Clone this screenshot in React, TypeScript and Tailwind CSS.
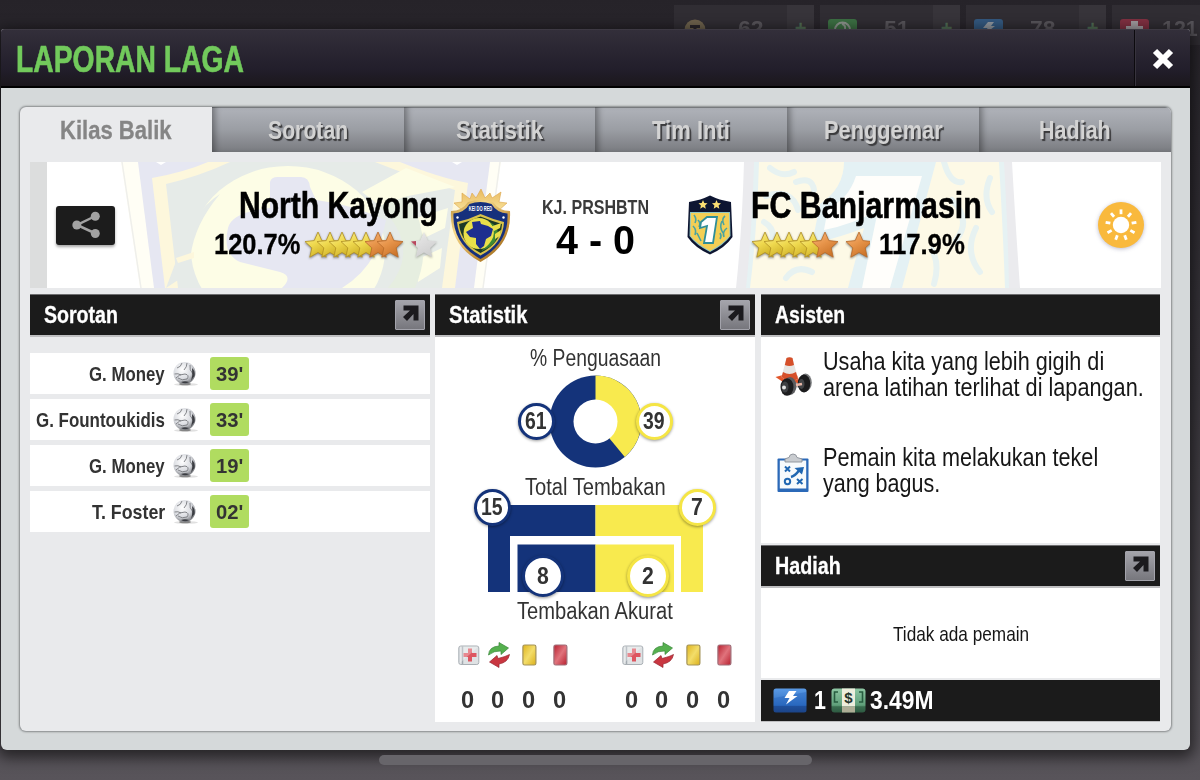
import { useLayoutEffect, useRef, useState, type ReactNode } from "react";
import clsx from "clsx";

interface CondensedProps {
  /** Width in pixels that the line of text is squeezed into. */
  width: number;
  className?: string;
  children: ReactNode;
}

/** A single line of text, condensed horizontally to a given width. */
function Condensed({ width, className, children }: CondensedProps) {
  const ref = useRef<HTMLSpanElement>(null);
  const [scale, setScale] = useState(0.8);

  useLayoutEffect(() => {
    if (ref.current) setScale(width / ref.current.offsetWidth);
  }, [width]);

  return (
    <span className={clsx("flex shrink-0 leading-none whitespace-nowrap", className)} style={{ width }}>
      <span ref={ref} className="shrink-0 origin-left" style={{ transform: `scaleX(${scale})` }}>
        {children}
      </span>
    </span>
  );
}

const STAR = "M14 1 L17.8 9.6 L27 10.6 L20.2 16.9 L22.2 26.2 L14 21.5 L5.8 26.2 L7.8 16.9 L1 10.6 L10.2 9.6 Z";

function Defs() {
  return (
    <svg width="0" height="0" className="absolute" aria-hidden="true">
      <defs>
        <linearGradient id="gold" x1="0" y1="0" x2="0.6" y2="1">
          <stop offset="0" stopColor="#f9ef9c" />
          <stop offset="0.5" stopColor="#efd94f" />
          <stop offset="1" stopColor="#cdae24" />
        </linearGradient>
        <linearGradient id="orange" x1="0" y1="0" x2="0.6" y2="1">
          <stop offset="0" stopColor="#f7b984" />
          <stop offset="0.5" stopColor="#e8964c" />
          <stop offset="1" stopColor="#cb7328" />
        </linearGradient>
        <linearGradient id="silver" x1="0" y1="0" x2="0.6" y2="1">
          <stop offset="0" stopColor="#ececec" />
          <stop offset="1" stopColor="#cfcfcf" />
        </linearGradient>
        <linearGradient id="crestGold" x1="0" y1="0" x2="1" y2="1">
          <stop offset="0" stopColor="#b98a33" />
          <stop offset="0.3" stopColor="#f6d98a" />
          <stop offset="0.7" stopColor="#c08a34" />
          <stop offset="1" stopColor="#8a5f1e" />
        </linearGradient>
        <linearGradient id="crown" x1="0" y1="0" x2="0" y2="1">
          <stop offset="0" stopColor="#e9b95c" />
          <stop offset="1" stopColor="#f8e29b" />
        </linearGradient>
        <linearGradient id="blueBox" x1="0" y1="0" x2="0" y2="1">
          <stop offset="0" stopColor="#5b9be6" />
          <stop offset="0.7" stopColor="#2f6fc4" />
          <stop offset="0.74" stopColor="#1f4f9b" />
          <stop offset="1" stopColor="#1b4488" />
        </linearGradient>
        <linearGradient id="greenBox" x1="0" y1="0" x2="0" y2="1">
          <stop offset="0" stopColor="#8fc7a4" />
          <stop offset="0.7" stopColor="#5f9f79" />
          <stop offset="0.76" stopColor="#3a6e50" />
          <stop offset="1" stopColor="#2e5a41" />
        </linearGradient>
        <radialGradient id="ball" cx="0.4" cy="0.35" r="0.7">
          <stop offset="0" stopColor="#ffffff" />
          <stop offset="0.6" stopColor="#d9dbe0" />
          <stop offset="1" stopColor="#6f7176" />
        </radialGradient>
        <linearGradient id="red" x1="0" y1="0" x2="1" y2="1">
          <stop offset="0" stopColor="#b8202f" />
          <stop offset="0.5" stopColor="#e0737c" />
          <stop offset="1" stopColor="#b8202f" />
        </linearGradient>
        <linearGradient id="yellow" x1="0" y1="0" x2="1" y2="1">
          <stop offset="0" stopColor="#dfb41e" />
          <stop offset="0.5" stopColor="#f3dd6a" />
          <stop offset="1" stopColor="#dbb01a" />
        </linearGradient>
      </defs>
    </svg>
  );
}

interface StarsProps {
  fills: string[];
  width: number;
}

function Stars({ fills, width }: StarsProps) {
  return (
    <svg width={width} height="30" className="shrink-0 drop-shadow-[0_1px_1px_rgba(0,0,0,0.45)]">
      {fills.map((fill, i) => (
        <path
          key={i}
          d={STAR}
          transform={`translate(${i * 12} 1)`}
          fill={fill}
          stroke={fill === "url(#gold)" ? "#b08f22" : "#b86a28"}
          strokeWidth="0.8"
          strokeLinejoin="round"
        />
      ))}
    </svg>
  );
}

/* ---------- crests ---------- */

function KayongCrest() {
  return (
    <svg width="61" height="74" viewBox="0 0 61 74" className="shrink-0">
      <path d="M13 22 L4 14 L12 13 L12 4 L20 10 L22 4 L26 9 L31 0 L35 9 L40 4 L42 9 L51 3 L49 13 L57 14 L48 22Z" fill="url(#crown)" stroke="#dba54a" strokeWidth="0.6" />
      <path d="M1 22 Q12 22 18 13 Q30 9 43 13 Q49 22 60 22 Q62 56 30.500 73 Q-1 56 1 22Z" fill="url(#crestGold)" />
      <path d="M3.500 24.500 Q14 24 19.500 15 Q30 11 41.500 15 Q47 24 57.500 24.500 Q59 54 30.500 70 Q2 54 3.500 24.500Z" fill="#16307c" />
      <path d="M7 33 Q20 30 30.500 25 Q42 30 54 33 Q53 55 30.500 66.500 Q9 55 7 33Z" fill="#d9c24a" />
      <path d="M9 35 Q20 32 30.500 27.500 Q42 32 52 35 Q51 54 30.500 64 Q11 54 9 35Z" fill="#1d3a26" />
      <circle cx="29" cy="44.500" r="15.500" fill="#e9e04a" />
      <path d="M31 62 Q51 55 47 38 L40 33 Q51 48 31 62Z" fill="#3f8a34" />
      <path d="M40 38 L51 34 L50 39 L44 42Z M45 45 L51 41 L50 47 L45 50Z" fill="#e9e04a" />
      <path d="M16 43 L23 39 L22 33 L30 32 L31 35 L38 37 L43 40 L41 47 L36 50 L34 57 L30 60 L26 55 L26 49 L20 48Z" fill="#1d2f8f" />
      <g transform="translate(30.500 21.500) scale(0.54 1)">
        <text textAnchor="middle" fontSize="7.500" fontWeight="700" fill="#fff">
          KEI DO RED
        </text>
      </g>
      <circle cx="7.500" cy="28.500" r="1.200" fill="#fff" />
      <circle cx="53.500" cy="28.500" r="1.200" fill="#fff" />
    </svg>
  );
}

function BanjarmasinCrest() {
  return (
    <svg width="46" height="60" viewBox="0 0 46 60" className="shrink-0">
      <path d="M2 7 Q14 5 23 0.500 Q32 5 44 7 L45.500 42 Q38 53 23 59.500 Q8 53 0.500 42Z" fill="#0d1531" />
      <path d="M3 17 H43 L43.500 41 Q37 50 23 57 Q9 50 2.500 41Z" fill="#8ec6c4" />
      <path d="M4 18 H42 L42.500 41 Q36 49 23 56 Q10 49 3.500 41Z" fill="#f3cf55" />
      <path d="M7 20 q3 4 1 8 M6 31 q4 4 2 9 M10 38 q2 4 4 8 M38 21 q-4 3 -1 9 M40 33 q-5 4 -3 9 M35 26 q-3 6 1 12 M11 25 q3 3 1 7 M33 44 q2 -3 0 -6" fill="none" stroke="#4aa3a0" strokeWidth="1.600" />
      <path d="M20 22 H30 L26 48 H17 L20 31 L13 33 L14 27Z" fill="#fff" stroke="#2f8e98" strokeWidth="1.800" />
      <path d="M16 5 l1.300 3 3.200.3 -2.400 2.200 .7 3.200 -2.800 -1.700 -2.800 1.700 .7 -3.200 -2.400 -2.200 3.200 -.3z M29.500 5 l1.300 3 3.200.3 -2.400 2.200 .7 3.200 -2.800 -1.700 -2.800 1.700 .7 -3.200 -2.400 -2.200 3.200 -.3z" fill="#fbdf73" />
    </svg>
  );
}

function KayongWatermark() {
  return (
    <svg width="410" height="126" viewBox="0 0 410 126" className="absolute top-0 left-20" aria-hidden="true">
      <path d="M11 0 H391 L373 126 H30Z" fill="#fffef5" />
      <path d="M12 0 L31 126 M390 0 L373 126" stroke="#efefeb" strokeWidth="1.500" />
      <path d="M28 0 H380 L364 126 H44Z" fill="#e6e7f2" />
      <path d="M42 16 Q75 10 98 0 H290 Q330 16 358 21 L345 126 H55Z" fill="#fdf7dc" />
      <path d="M56 22 Q90 14 120 0 H265 Q300 14 345 28 L332 126 H68Z" fill="#e6ebe8" />
      <ellipse cx="178" cy="88" rx="97" ry="84" fill="#fdfde6" />
      <path d="M56 126 L80 110 Q78 70 110 32 Q82 50 68 94Z" fill="#e6ebe8" />
      <path d="M66 96 L84 90 L84 96 L68 101Z" fill="#fdf7dc" />
      <path d="M252 30 L296 6 L345 25 L298 34 L270 44Z M300 58 L338 46 L335 66 L306 80Z M302 100 L332 86 L330 106 L308 120Z" fill="#fdfde6" />
      <path d="M270 44 Q312 86 278 126 H305 Q325 80 298 34Z" fill="#e6eee0" />
      <path d="M160 20 Q161 15 168 15 H191 Q199 15 200 25 L206 38 Q240 42 276 58 Q268 104 232 126 H172 Q184 114 170 110 L130 100 Q112 92 118 66 Q122 50 160 46Z" fill="#e6e7f2" />
      <path d="M46 0 l5 3 5 -3z M342 0 l5 3 5 -3z" fill="#fff" />
    </svg>
  );
}

function BanjarmasinWatermark() {
  return (
    <svg width="284" height="126" viewBox="0 0 284 126" className="absolute top-0 left-[706px]" aria-hidden="true">
      <path d="M8 0 H276 Q280 70 284 126 H0 Q6 70 8 0Z" fill="#ebebee" />
      <path d="M18 0 H268 Q272 70 273 126 H10 Q16 70 18 0Z" fill="#e6f2f3" />
      <path d="M23 0 H263 Q267 70 269 126 H14 Q21 70 23 0Z" fill="#fdf9e6" />
      <path d="M108 0 H200 L166 126 H112 L128 66 Q108 74 76 82 L84 42 Q108 26 108 0Z" fill="#e4f1f4" />
      <path d="M120 14 H186 L154 126 H126 L142 48 Q118 62 88 68 L92 46 Q112 38 120 14Z" fill="#fffefb" />
      <path d="M34 6 q12 10 24 4 M30 34 q26 -8 32 14 M60 20 q16 -6 18 8 M28 60 q14 8 6 26 M50 116 q10 -14 26 -6 M208 0 q6 22 18 20 M216 38 q20 20 4 40 M240 66 q-12 24 4 44 M254 16 q-8 20 2 34 M196 88 q8 14 2 34" fill="none" stroke="#e7f2f1" strokeWidth="6" strokeLinecap="round" />
    </svg>
  );
}

/* ---------- small icons ---------- */

function ShareIcon() {
  return (
    <svg width="30" height="28" viewBox="0 0 30 28">
      <path d="M24.500 5 L6 14 L24.500 22.500" fill="none" stroke="#a2a2a2" strokeWidth="2.500" />
      <g fill="#a2a2a2">
        <circle cx="24.300" cy="5.200" r="4.500" />
        <circle cx="5.800" cy="14" r="4.500" />
        <circle cx="24.300" cy="22.500" r="4.500" />
      </g>
    </svg>
  );
}

function SunIcon() {
  const rays = [0, 40, 80, 120, 160, 200, 240, 280, 320];
  return (
    <svg width="46" height="46" viewBox="0 0 46 46" className="shrink-0 drop-shadow-[0_1px_2px_rgba(60,60,110,0.35)]">
      <circle cx="23" cy="23" r="23" fill="#f9b93d" />
      <circle cx="23" cy="23" r="8.200" fill="#fff" />
      {rays.map((angle) => (
        <path key={angle} d="M23 12.200 V7.400" stroke="#fff" strokeWidth="2.800" transform={`rotate(${angle} 23 23)`} />
      ))}
    </svg>
  );
}

function BallIcon() {
  return (
    <svg width="27" height="26" viewBox="0 0 27 26" className="shrink-0">
      <ellipse cx="14" cy="23.500" rx="12" ry="1.500" fill="#000" opacity="0.12" />
      <ellipse cx="13" cy="23" rx="6" ry="1.300" fill="#000" opacity="0.4" />
      <circle cx="12.500" cy="12" r="11" fill="url(#ball)" />
      <path d="M5 7 Q9 6 10 2 M12 9 Q15 6 15 2 M2.500 13 Q6 12 9 14 M4 17 Q7 13 13 13 Q18 14 15 18 Q10 20 6 17 M18 4 Q17 9 21 13" fill="none" stroke="#77797e" strokeWidth="0.900" />
      <path d="M20 7 Q23.500 10 22.500 15 Q20 18 19 20 Q21 14 20 7Z M9 21 Q13 19.500 17 21 Q13 23.500 9 21Z" fill="#3b3d42" />
    </svg>
  );
}

function ExpandButton() {
  return (
    <button
      type="button"
      aria-label="Buka"
      className="flex h-[30px] w-[30px] items-center justify-center rounded-[1px] border border-[#a3a3ab] bg-linear-to-b from-[#a4a4ab] to-[#77777d]"
    >
      <svg width="18" height="18" viewBox="0 0 18 18" className="translate-x-[0.500px] -translate-y-[1.500px]">
        <path d="M2 1 H17 V16 H12 V9.500 L5.500 16.500 L1.500 12.500 L8.500 6 H2Z" fill="#1b1a1e" />
      </svg>
    </button>
  );
}

function ConeIcon() {
  return (
    <svg width="37" height="40" viewBox="0 0 37 40" className="shrink-0">
      <path d="M0.500 20 L8 18 H22 L26 28 L8 25Z" fill="#e2562a" />
      <path d="M11.500 1 Q14.500 -0.500 17.500 1 L23 22 Q14 27 6.500 20Z" fill="#e7e5e2" />
      <path d="M11.500 1 Q14.500 -0.500 17.500 1 L19 8 Q14.500 10 9.800 8Z M8 15 Q14.500 19 21 15 L23 22 Q14 27 6.500 20Z" fill="#d6502a" />
      <path d="M18 25 L27 27 V31 L18 30Z" fill="#b9b4b4" />
      <ellipse cx="15" cy="29" rx="6.500" ry="9" fill="#5b5c5f" />
      <ellipse cx="12" cy="30" rx="6.500" ry="8.800" fill="#1d1d1f" />
      <ellipse cx="10" cy="30" rx="3.500" ry="5.500" fill="#3e4043" />
      <circle cx="9" cy="30.500" r="2" fill="#e2e2e2" />
      <ellipse cx="30.500" cy="25.500" rx="6.300" ry="9" fill="#77797b" />
      <ellipse cx="29" cy="26.500" rx="6.300" ry="9" fill="#1b1b1d" />
      <ellipse cx="26.500" cy="27" rx="3" ry="5" fill="#424447" />
      <path d="M21 28 L27 27" stroke="#e9b7a8" strokeWidth="2.500" />
    </svg>
  );
}

function ClipboardIcon() {
  return (
    <svg width="32" height="40" viewBox="0 0 32 40" className="shrink-0">
      <rect x="0.500" y="5.500" width="31" height="33.500" rx="1" fill="#2b69b8" />
      <rect x="2.800" y="7.500" width="26.400" height="28" fill="#f7fafc" />
      <path d="M8 9 V6 Q10 5 12 4.500 Q12.500 1 16 1 Q19.500 1 20 4.500 Q22 5 25 6 V9Z" fill="#c9ccd0" stroke="#8b9097" strokeWidth="0.900" />
      <g fill="none" stroke="#2167b2" strokeWidth="2">
        <path d="M8 13.500 L13 18.500 M13 13.500 L8 18.500 M20 26 L25.500 31 M25.500 26 L20 31" />
        <circle cx="10.500" cy="28.500" r="2.700" />
        <path d="M14 24 Q18 23 22 17.500" strokeWidth="2.500" />
      </g>
      <path d="M17.500 15 L27 14 L25 21.500Z" fill="#2167b2" />
    </svg>
  );
}

function InjuryIcon() {
  return (
    <svg width="22" height="24" viewBox="0 0 22 24" className="shrink-0">
      <rect x="0.800" y="3" width="20" height="18.500" rx="2" fill="#dfe2e4" stroke="#a9afb4" />
      <path d="M4.500 3.500 V21" stroke="#a3aab0" strokeWidth="1.500" />
      <path d="M10 5.500 h4 v4.500 h4.500 v4 h-4.500 v4.500 h-4 v-4.500 h-4.500 v-4 h4.500z" fill="#dd5660" />
      <path d="M2 20 L20 4 V3.500 H2Z" fill="#fff" opacity="0.3" />
    </svg>
  );
}

function SwapIcon() {
  return (
    <svg width="22" height="26" viewBox="0 0 22 26" className="shrink-0">
      <path d="M0.500 13 Q1 4.500 11 4 V0.500 L20.500 6 L13 12.500 V9 Q6 8.500 0.500 13Z" fill="#55b04e" stroke="#378538" strokeWidth="0.700" />
      <path d="M21.500 12.500 Q18 14.500 10 16.500 L9 13.500 L1.500 20 L11 25.500 V22 Q20 20.500 21.500 12.500Z" fill="#c93640" stroke="#96242e" strokeWidth="0.700" />
    </svg>
  );
}

function CardIcon({ color }: { color: "yellow" | "red" }) {
  return (
    <svg width="15" height="24" viewBox="0 0 15 24" className="shrink-0">
      <rect
        x="0.900"
        y="2"
        width="13"
        height="20"
        rx="1.800"
        fill={color === "red" ? "url(#red)" : "url(#yellow)"}
        stroke={color === "red" ? "#a0707a" : "#a3935a"}
        strokeWidth="1.200"
      />
    </svg>
  );
}

function EnergyIcon() {
  return (
    <svg width="34" height="25" viewBox="0 0 34 25" className="shrink-0">
      <rect x="0.500" y="0.500" width="33" height="24" rx="2.500" fill="url(#blueBox)" />
      <path d="M1 10 L33 4 V18 H1Z" fill="#1f5db5" opacity="0.35" />
      <path d="M16 3 H23.500 L20 8 H24.500 L13 16.500 L16.500 10 H11.500Z" fill="#fff" />
    </svg>
  );
}

function CashIcon() {
  return (
    <svg width="35" height="25" viewBox="0 0 35 25" className="shrink-0">
      <rect x="0.500" y="0.500" width="34" height="24" rx="3" fill="url(#greenBox)" />
      <path d="M7 4 H3.500 V14 H7 M28 4 H31.500 V14 H28" fill="none" stroke="#275c3f" strokeWidth="1.600" />
      <rect x="11" y="0.500" width="13" height="18" fill="#eeeedd" />
      <rect x="11" y="18.500" width="13" height="6" fill="#aeae96" />
      <text x="17.500" y="14.500" textAnchor="middle" fontSize="15" fontWeight="700" fill="#25352b">
        $
      </text>
    </svg>
  );
}

/* ---------- layout pieces ---------- */

const RESOURCES = [
  { kind: "token", value: "62" },
  { kind: "cash", value: "51" },
  { kind: "energy", value: "78" },
  { kind: "medic", value: "121" },
];

function ResourceIcon({ kind }: { kind: string }) {
  if (kind === "token") {
    return (
      <svg width="22" height="22" viewBox="0 0 22 22">
        <circle cx="11" cy="11" r="10.500" fill="#6d614c" />
        <path d="M6 6 H16 V9 H12.500 V18 H9.500 V9 H6Z" fill="#29252a" />
      </svg>
    );
  }
  return (
    <svg width="29" height="22" viewBox="0 0 29 22">
      <rect
        width="29"
        height="22"
        rx="3"
        fill={kind === "cash" ? "#3c6f43" : kind === "energy" ? "#33587f" : "#803041"}
      />
      {kind === "cash" && <path d="M7 11 a7.500 7.500 0 0 1 15 0 M14 5 q4 1 3 6" fill="none" stroke="#8b928b" strokeWidth="2" />}
      {kind === "energy" && <path d="M14 3 H20 L17 7 H21 L11 15 L13.500 9 H9Z" fill="#90979f" />}
      {kind === "medic" && <path d="M11 2 h7 v5 h5 v7 h-5 v5 h-7 v-5 h-5 v-7 h5z" fill="#a09a9e" />}
    </svg>
  );
}

function ResourceBar() {
  return (
    <div className="absolute top-[5px] right-0 left-[674px] flex gap-1.5">
      {RESOURCES.map((item) => {
        const last = item.kind === "medic";
        return (
          <div key={item.kind} className={clsx("flex h-10 bg-[#302d33]", last ? "flex-1" : "w-[140px] shrink-0")}>
            <div className={clsx("w-10 pt-3.5", item.kind === "token" ? "pl-2.5" : "pl-2")}>
              <ResourceIcon kind={item.kind} />
            </div>
            <div className={clsx("flex flex-1 pt-[13px] text-[22px] font-bold text-[#57545a]", last ? "pl-2.5" : "justify-center")}>
              <Condensed width={last ? 36 : 25}>{item.value}</Condensed>
            </div>
            {!last && (
              <div className="w-[27px] bg-[#37343a] pt-[9px] text-center text-xl leading-7 font-bold text-[#4f6b54]">+</div>
            )}
          </div>
        );
      })}
    </div>
  );
}

const TABS = [
  { label: "Kilas Balik", width: 112 },
  { label: "Sorotan", width: 80 },
  { label: "Statistik", width: 87 },
  { label: "Tim Inti", width: 78 },
  { label: "Penggemar", width: 119 },
  { label: "Hadiah", width: 72 },
];

function TabBar() {
  return (
    <div role="tablist" className="flex h-[45px] shrink-0 overflow-hidden rounded-t-md">
      {TABS.map((tab, i) => (
        <button
          key={tab.label}
          type="button"
          role="tab"
          aria-selected={i === 0}
          className={clsx(
            "flex w-48 items-center justify-center pt-px text-[26px] font-bold",
            i === 0
              ? "text-[#858585] [-webkit-text-stroke:0.3px_#858585]"
              : "bg-linear-to-b from-[#b0b3ba] via-[#9b9ea4] to-[#797b80] text-[#d3d3d3] shadow-[inset_6px_0_6px_-3px_rgba(0,0,0,0.35),inset_0_1px_0_#7d8084] [text-shadow:2px_2px_1px_#3a3a3c]",
          )}
        >
          <Condensed width={tab.width}>{tab.label}</Condensed>
        </button>
      ))}
    </div>
  );
}

function PanelHeader({ title, width, expandable }: { title: string; width: number; expandable?: boolean }) {
  return (
    <div className="flex h-[43px] shrink-0 items-center justify-between border-t border-b-2 border-t-[#6d6d6f] border-b-[#bfbfc1] bg-[#1b1b1b] pr-[5px] pl-3.5 text-[23px] font-bold text-white">
      <Condensed width={width} className="[-webkit-text-stroke:0.3px_#fff]">{title}</Condensed>
      {expandable && <ExpandButton />}
    </div>
  );
}

function ScoreBand() {
  return (
    <section className="relative flex h-[126px] shrink-0 items-center overflow-hidden bg-white">
      <KayongWatermark />
      <BanjarmasinWatermark />
      <div className="relative h-full w-[17px] bg-[#dcdddd]" />
      <button
        type="button"
        aria-label="Bagikan"
        className="relative ml-[9px] flex h-[39px] w-[59px] items-center justify-center rounded-[3px] bg-[#1c1c1c] shadow-[0_2px_3px_rgba(0,0,0,0.35)]"
      >
        <ShareIcon />
      </button>

      <div className="relative flex w-[323px] flex-col items-end gap-1.5 pb-1 text-black">
        <Condensed width={199} className="text-[37px] font-bold [-webkit-text-stroke:0.6px_#000]">
          North Kayong
        </Condensed>
        <div className="flex items-center">
          <Condensed width={86} className="text-[29px] font-bold [-webkit-text-stroke:0.3px_#000]">120.7%</Condensed>
          <div className="ml-1 flex gap-1.5">
            <Stars
              width={100}
              fills={["url(#gold)", "url(#gold)", "url(#gold)", "url(#gold)", "url(#gold)", "url(#orange)", "url(#orange)"]}
            />
            <svg width="28" height="30" className="drop-shadow-[0_1px_1px_rgba(0,0,0,0.3)]">
              <path d={STAR} transform="translate(0 1)" fill="url(#silver)" />
              <path d="M1 11.500 L6 11 V16 Z" fill="#b8475c" />
            </svg>
          </div>
        </div>
      </div>

      <div className="relative ml-3 pt-0.5">
        <KayongCrest />
      </div>

      <div className="relative flex w-[176px] flex-col items-center gap-[3px] pt-1.5 pr-2">
        <Condensed width={107} className="text-[21px] font-bold text-[#3a3a3a]">KJ. PRSHBTN</Condensed>
        <Condensed width={79} className="text-[40px] font-bold text-black">4 - 0</Condensed>
      </div>

      <div className="relative">
        <BanjarmasinCrest />
      </div>

      <div className="relative ml-[18px] flex flex-col gap-1.5 pb-1 text-black">
        <Condensed width={231} className="text-[37px] font-bold [-webkit-text-stroke:0.6px_#000]">
          FC Banjarmasin
        </Condensed>
        <div className="flex items-center">
          <Stars
            width={88}
            fills={["url(#gold)", "url(#gold)", "url(#gold)", "url(#gold)", "url(#gold)", "url(#orange)"]}
          />
          <div className="ml-1.5 w-[25px] overflow-hidden">
            <Stars width={28} fills={["url(#orange)"]} />
          </div>
          <Condensed width={86} className="ml-[9px] text-[29px] font-bold [-webkit-text-stroke:0.3px_#000]">117.9%</Condensed>
        </div>
      </div>

      <div className="relative ml-auto pr-[17px]">
        <SunIcon />
      </div>
    </section>
  );
}

const GOALS = [
  { player: "G. Money", width: 76, minute: "39'" },
  { player: "G. Fountoukidis", width: 129, minute: "33'" },
  { player: "G. Money", width: 76, minute: "19'" },
  { player: "T. Foster", width: 73, minute: "02'" },
];

function Highlights() {
  return (
    <section className="w-[400px]">
      <PanelHeader title="Sorotan" width={74} expandable />
      <ul className="mt-4 flex flex-col gap-[5px]">
        {GOALS.map((goal) => (
          <li key={goal.minute} className="flex h-[41px] items-center bg-white text-[21px] font-bold text-[#333]">
            <div className="flex w-[135px] justify-end">
              <Condensed width={goal.width}>{goal.player}</Condensed>
            </div>
            <div className="ml-[7px] w-[38px]">
              <BallIcon />
            </div>
            <div className="flex h-[33px] w-[39px] items-center justify-center rounded-[3px] bg-[#b0dc60]">
              <Condensed width={27}>{goal.minute}</Condensed>
            </div>
          </li>
        ))}
      </ul>
    </section>
  );
}

interface BadgeProps {
  value: string;
  team: "home" | "away";
  className: string;
}

/** Round counter that sits on the edge of a chart. */
function Badge({ value, team, className }: BadgeProps) {
  return (
    <div
      className={clsx(
        "absolute flex items-center justify-center rounded-full border-[3px] bg-white text-[23px] font-bold text-[#333] shadow-[0_1px_3px_rgba(0,0,0,0.4)]",
        team === "home" ? "border-[#14337a]" : "border-[#f5e544]",
        className,
      )}
    >
      <Condensed width={value.length > 1 ? 22 : 12}>{value}</Condensed>
    </div>
  );
}

function TeamCounters() {
  return (
    <div className="flex w-[111px] flex-col gap-[21px]">
      <div className="flex h-6 items-center">
        <div className="w-[30px]"><InjuryIcon /></div>
        <div className="w-[34px]"><SwapIcon /></div>
        <div className="w-[31px]"><CardIcon color="yellow" /></div>
        <CardIcon color="red" />
      </div>
      <div className="flex gap-[18px] pl-[3px] text-[24px] font-bold text-[#333]">
        {["injury", "swap", "yellow", "red"].map((key) => (
          <Condensed key={key} width={12.8}>0</Condensed>
        ))}
      </div>
    </div>
  );
}

function Statistics() {
  return (
    <section className="flex w-[320px] flex-col">
      <PanelHeader title="Statistik" width={78} expandable />
      <div className="flex flex-1 flex-col items-center bg-white text-[23px] text-[#333]">
        <Condensed width={131} className="mt-2.5">% Penguasaan</Condensed>

        <div className="relative mt-[5px] h-[93px] w-[155px]">
          <svg width="155" height="93" viewBox="0 0 155 93">
            <circle cx="77.500" cy="46.500" r="46" fill="#14337a" />
            <path d="M77.500 46.500 V0.500 A46 46 0 0 1 106.800 81.900Z" fill="#f8ea4e" />
            <circle cx="77.500" cy="46.500" r="22" fill="#fff" />
          </svg>
          <Badge value="61" team="home" className="top-7 left-0 size-[37px]" />
          <Badge value="39" team="away" className="top-7 right-0 size-[37px]" />
        </div>

        <Condensed width={141} className="mt-2">Total Tembakan</Condensed>

        <div className="relative mt-1.5 h-[87px] w-[215px]">
          <svg width="215" height="87" viewBox="0 0 215 87">
            <path d="M0 87 V0 H107.500 V31 H22 V87Z M29.500 87 V39.500 H107.500 V87Z" fill="#14337a" />
            <path d="M107.500 0 H215 V87 H193 V31 H107.500Z M107.500 39.500 H186 V87 H107.500Z" fill="#f8ea4e" />
          </svg>
          <Badge value="15" team="home" className="-top-4 -left-3.5 size-[37px]" />
          <Badge value="7" team="away" className="-top-4 -right-[13px] size-[37px]" />
          <Badge value="8" team="home" className="top-[50px] left-[34px] size-[42px]" />
          <Badge value="2" team="away" className="top-[50px] left-[139px] size-[42px]" />
        </div>

        <Condensed width={156} className="mt-2">Tembakan Akurat</Condensed>

        <div className="mt-5 flex gap-[53px]">
          <TeamCounters />
          <TeamCounters />
        </div>
      </div>
    </section>
  );
}

function AssistantAndRewards() {
  return (
    <section className="ml-px flex w-[399px] flex-col">
      <PanelHeader title="Asisten" width={70} />
      <div className="flex h-[206px] flex-col bg-white pt-3 pl-3.5 text-[25px] text-[#161616]">
        <div className="flex h-[96px] items-start">
          <div className="w-[48px] pt-2"><ConeIcon /></div>
          <div className="flex flex-col gap-[0.500px]">
            <Condensed width={281}>Usaha kita yang lebih gigih di</Condensed>
            <Condensed width={321}>arena latihan terlihat di lapangan.</Condensed>
          </div>
        </div>
        <div className="flex items-start">
          <div className="w-[48px] pt-2 pl-0.5"><ClipboardIcon /></div>
          <div className="flex flex-col gap-[0.500px]">
            <Condensed width={275}>Pemain kita melakukan tekel</Condensed>
            <Condensed width={117}>yang bagus.</Condensed>
          </div>
        </div>
      </div>
      <div className="h-[2px]" />
      <PanelHeader title="Hadiah" width={66} expandable />
      <div className="flex h-[90px] items-center justify-center bg-white text-[21px] text-[#161616]">
        <Condensed width={136}>Tidak ada pemain</Condensed>
      </div>
      <div className="mt-[2px] flex h-[42px] items-center border-b border-[#bfbfc1] bg-[#1b1b1b] pl-3 text-[25px] font-bold text-white">
        <EnergyIcon />
        <Condensed width={12} className="ml-[7px]">1</Condensed>
        <div className="ml-[5px]"><CashIcon /></div>
        <Condensed width={63} className="ml-1">3.49M</Condensed>
      </div>
    </section>
  );
}

export default function App() {
  return (
    <div className="relative h-[780px] w-[1200px] overflow-hidden bg-linear-to-b from-[#262329] via-[#3a373d] to-[#58545a] pt-[29px] pl-px font-['Liberation_Sans',Arial,sans-serif]">
      <Defs />
      <ResourceBar />

      <main className="relative flex h-[721px] w-[1189px] flex-col rounded-t-[3px] rounded-b-md bg-[#d5d9da] shadow-[0_4px_14px_4px_rgba(0,0,0,0.55)]">
        <header className="flex h-[59px] shrink-0 items-stretch justify-between rounded-t-[3px] border-t border-b-2 border-t-[#3d3943] border-b-black bg-linear-to-b from-[#332f3a] via-[#221e2b] via-70% to-[#1b171c]">
          <h1 className="flex items-center pt-[3px] pl-[15px] text-[37px] font-bold text-[#72ca5c] [-webkit-text-stroke:0.6px_#72ca5c]">
            <Condensed width={228}>LAPORAN LAGA</Condensed>
          </h1>
          <button
            type="button"
            aria-label="Tutup"
            className="flex w-14 items-center justify-center border-l border-[#0c0a0e] pt-0.5 shadow-[inset_1px_0_0_#37333d]"
          >
            <svg width="22" height="22" viewBox="0 0 22 22">
              <path d="M3 3 L19 19 M19 3 L3 19" stroke="#fff" strokeWidth="6" />
            </svg>
          </button>
        </header>

        <div className="mx-[19px] mt-[19px] flex h-[624px] flex-col rounded-md bg-[#e9eaec] shadow-[0_0_2px_1px_#85888a]">
          <TabBar />
          <div className="mt-2.5 flex flex-1 flex-col px-2.5 pb-2.5">
            <ScoreBand />
            <div className="mt-1.5 flex flex-1 gap-[5px]">
              <Highlights />
              <Statistics />
              <AssistantAndRewards />
            </div>
          </div>
        </div>
      </main>

      <div className="absolute top-[755px] left-[379px] h-2.5 w-[433px] rounded-full bg-[#67656a]" />
    </div>
  );
}
